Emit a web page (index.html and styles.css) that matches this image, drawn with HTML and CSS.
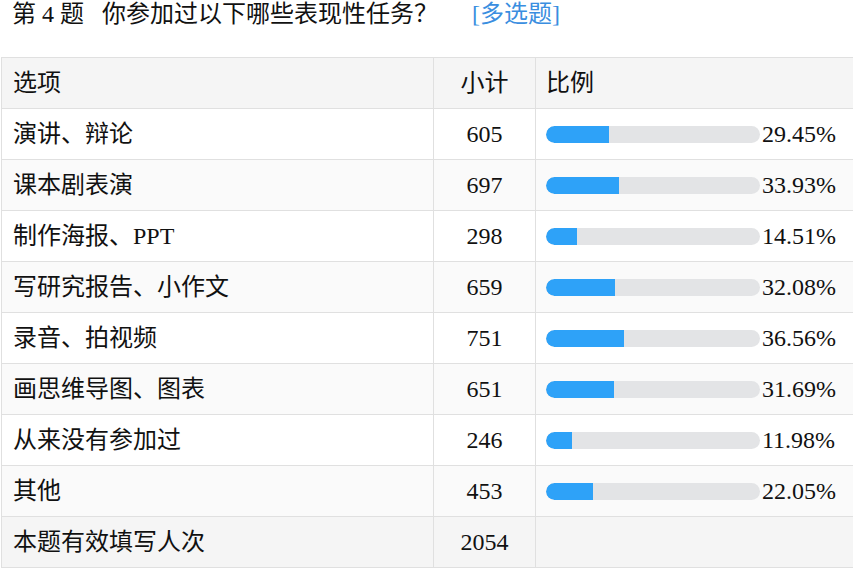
FILE: index.html
```html
<!DOCTYPE html>
<html lang="zh-CN">
<head>
<meta charset="utf-8">
<title>第 4 题</title>
<link rel="stylesheet" href="styles.css">
</head>
<body>
<div class="question">
  <div class="title">
    <span class="qnum">第 4 题</span>
    <span class="qtext">你参加过以下哪些表现性任务？</span>
    <span class="qtype">[多选题]</span>
  </div>
  <div class="table-wrap">
    <table class="stats">
      <colgroup>
        <col class="c-opt">
        <col class="c-cnt">
        <col class="c-pct">
      </colgroup>
      <thead>
        <tr><th class="opt">选项</th><th class="cnt">小计</th><th class="pct">比例</th></tr>
      </thead>
      <tbody>
        <tr><td class="opt">演讲、辩论</td><td class="cnt">605</td><td class="pct"><div class="bar-cell"><div class="bar"><div class="fill" style="width:29.45%"></div></div><span class="val">29.45%</span></div></td></tr>
        <tr><td class="opt">课本剧表演</td><td class="cnt">697</td><td class="pct"><div class="bar-cell"><div class="bar"><div class="fill" style="width:33.93%"></div></div><span class="val">33.93%</span></div></td></tr>
        <tr><td class="opt">制作海报、PPT</td><td class="cnt">298</td><td class="pct"><div class="bar-cell"><div class="bar"><div class="fill" style="width:14.51%"></div></div><span class="val">14.51%</span></div></td></tr>
        <tr><td class="opt">写研究报告、小作文</td><td class="cnt">659</td><td class="pct"><div class="bar-cell"><div class="bar"><div class="fill" style="width:32.08%"></div></div><span class="val">32.08%</span></div></td></tr>
        <tr><td class="opt">录音、拍视频</td><td class="cnt">751</td><td class="pct"><div class="bar-cell"><div class="bar"><div class="fill" style="width:36.56%"></div></div><span class="val">36.56%</span></div></td></tr>
        <tr><td class="opt">画思维导图、图表</td><td class="cnt">651</td><td class="pct"><div class="bar-cell"><div class="bar"><div class="fill" style="width:31.69%"></div></div><span class="val">31.69%</span></div></td></tr>
        <tr><td class="opt">从来没有参加过</td><td class="cnt">246</td><td class="pct"><div class="bar-cell"><div class="bar"><div class="fill" style="width:11.98%"></div></div><span class="val">11.98%</span></div></td></tr>
        <tr><td class="opt">其他</td><td class="cnt">453</td><td class="pct"><div class="bar-cell"><div class="bar"><div class="fill" style="width:22.05%"></div></div><span class="val">22.05%</span></div></td></tr>
      </tbody>
      <tfoot>
        <tr><td class="opt">本题有效填写人次</td><td class="cnt">2054</td><td class="pct"></td></tr>
      </tfoot>
    </table>
  </div>
</div>
</body>
</html>
```

FILE: styles.css
```css
html, body {
  margin: 0;
  padding: 0;
  background: #ffffff;
  overflow: hidden;
}

body {
  font-family: "Liberation Serif", "Noto Sans CJK SC", serif;
  color: #111111;
}

.question {
  width: 853px;
}

.title {
  display: flex;
  align-items: center;
  height: 28px;
  padding-left: 12px;
  font-size: 24px;
  line-height: 28px;
}

.qtext {
  margin-left: 18px;
}

.qtype {
  margin-left: 34px;
  color: #3a8ee0;
}

.table-wrap {
  margin-top: 29px;
  padding-left: 1px;
  overflow: hidden;
}

.stats {
  border-collapse: collapse;
  table-layout: fixed;
  width: 900px;
  font-size: 24px;
}

.c-opt { width: 432px; }
.c-cnt { width: 102px; }
.c-pct { width: 366px; }

.stats th,
.stats td {
  border: 1px solid #e0e0e0;
  height: 50px;
  padding: 0;
  font-weight: normal;
  vertical-align: middle;
  line-height: 28px;
}

.stats thead tr,
.stats tfoot tr {
  background: #f5f5f5;
}

.stats tbody tr {
  background: #ffffff;
}

.stats tbody tr:nth-child(even) {
  background: #fafafa;
}

.opt {
  text-align: left;
  padding-left: 11px !important;
}

.cnt {
  text-align: center;
}

.pct {
  text-align: left;
  padding-left: 10px !important;
}

.bar-cell {
  display: flex;
  align-items: center;
}

.bar {
  width: 214px;
  height: 17px;
  border-radius: 9px;
  background: #e3e4e6;
  overflow: hidden;
  flex: none;
}

.fill {
  height: 100%;
  background: #2ea2f8;
  border-radius: 9px 0 0 9px;
}

.val {
  margin-left: 2px;
}
```
